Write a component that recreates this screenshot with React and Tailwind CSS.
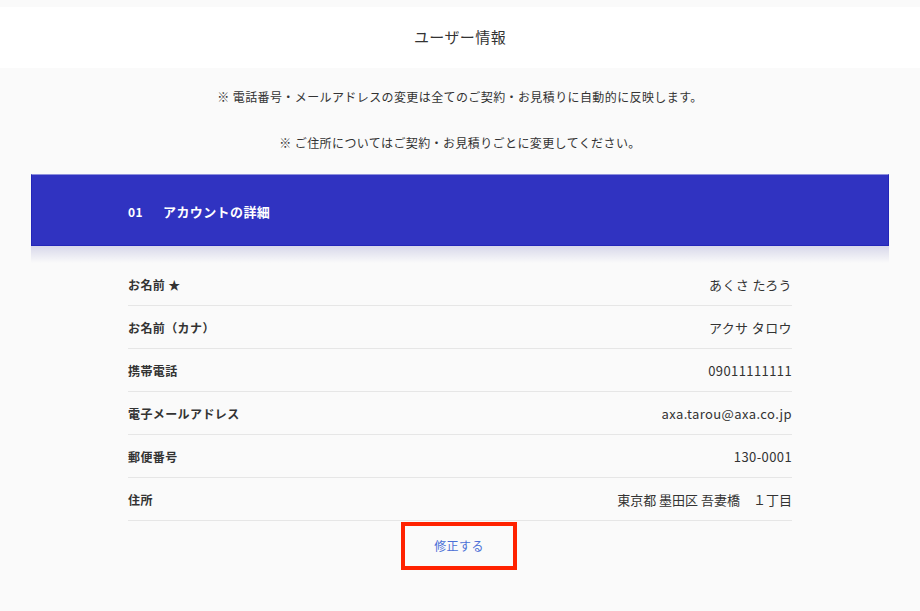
import React from "react";

const rows = [
  { label: "お名前 ★", value: "あくさ たろう" },
  { label: "お名前（カナ）", value: "アクサ タロウ" },
  { label: "携帯電話", value: "09011111111" },
  { label: "電子メールアドレス", value: "axa.tarou@axa.co.jp" },
  { label: "郵便番号", value: "130-0001" },
  { label: "住所", value: "東京都 墨田区 吾妻橋　１丁目" },
];

const App = () => {
  return (
    <div
      className="min-h-[611px] bg-[#fafafa] text-[#333] tracking-[0.025em]"
      style={{ fontFamily: '"Noto Sans CJK JP", "Noto Sans", sans-serif' }}
    >
      {/* Header */}
      <div className="pt-[7px]">
        <div className="h-[61px] bg-white flex items-center justify-center text-[15px] text-[#333]">
          ユーザー情報
        </div>
      </div>

      {/* Notes */}
      <div className="pt-[20px] flex flex-col items-center gap-[28px] text-[12px] leading-[18px] text-[#333]">
        <p>※ 電話番号・メールアドレスの変更は全てのご契約・お見積りに自動的に反映します。</p>
        <p>※ ご住所についてはご契約・お見積りごとに変更してください。</p>
      </div>

      {/* Card */}
      <div className="mx-[31px] mt-[22px] w-[858px]">
        <div className="h-[72px] bg-[#3033c1] border border-[#2326b8] border-t-[#8e90dc] flex items-center pt-[3px] pl-[96px] text-white font-bold">
          <span className="text-[12px] w-[35px]">01</span>
          <span className="text-[13px]">アカウントの詳細</span>
        </div>
        <div className="h-[17px] bg-gradient-to-b from-[#d8d8ea] to-[#fafafa]" />

        <div className="px-[97px]">
          {rows.map((r) => (
            <div
              key={r.label}
              className="h-[43px] flex items-center justify-between pt-[1px] border-b border-[#e6e6e6]"
            >
              <span className="text-[12px] font-bold text-[#333]">{r.label}</span>
              <span className={r.label === "住所" ? "text-[13px] text-[#333] tracking-normal" : "text-[13px] text-[#333]"}>
                {r.value}
              </span>
            </div>
          ))}
          <div className="flex justify-center pt-[1px] pr-[2px]">
            <button className="w-[116px] h-[48px] border-4 border-[#ff2200] flex items-center justify-center text-[12px] text-[#4a6fd6]">
              修正する
            </button>
          </div>
        </div>
      </div>
    </div>
  );
};

export default App;
